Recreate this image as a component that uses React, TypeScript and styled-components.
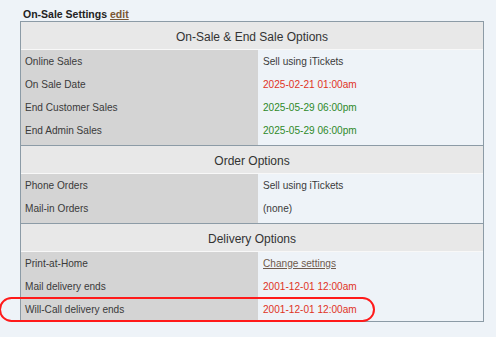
import React from 'react';
import styled, { createGlobalStyle } from 'styled-components';

const GlobalStyle = createGlobalStyle`
  html, body {
    margin: 0;
    padding: 0;
    background: #eef3f8;
    font-family: "Liberation Sans", Arial, sans-serif;
    color: #333;
  }
`;

const Page = styled.div`
  padding: 7px 0 0 20px;
  width: 464px;
`;

const Title = styled.div`
  font-size: 10.5px;
  font-weight: bold;
  line-height: 14px;
  padding-left: 3px;
  color: #222;

  a {
    color: #7a5634;
    text-decoration: underline;
    margin-left: 3px;
  }
`;

const Table = styled.div`
  border: 1px solid #8c9ba6;
`;

const Section = styled.div<{ $last?: boolean }>`
  border-bottom: ${p => (p.$last ? 'none' : '1px solid #8c9ba6')};
`;

const SectionHeader = styled.div`
  height: 27px;
  line-height: 30px;
  overflow: hidden;
  background: #e8e8e8;
  text-align: center;
  font-size: 12px;
  color: #333;
  border-bottom: 1px solid #f8f8f8;
`;

const Row = styled.div<{ $pad?: boolean }>`
  position: relative;
  display: grid;
  grid-template-columns: 237px 1fr;
  font-size: 10.1px;

  & > div {
    line-height: 23px;
    padding-bottom: ${p => (p.$pad ? '3px' : '0')};
  }
`;

const Label = styled.div`
  background: #d4d4d4;
  padding-left: 4px;
  color: #3a3a3a;
`;

const Value = styled.div<{ $tone?: 'red' | 'green' }>`
  padding-left: 5px;
  color: ${p => (p.$tone === 'red' ? '#e0331f' : p.$tone === 'green' ? '#2f8a2a' : '#3a3a3a')};
`;

const Link = styled.span`
  color: #6e5a4c;
  text-decoration: underline;
`;

const Highlight = styled.div`
  position: absolute;
  left: -22px;
  top: -1px;
  width: 372px;
  height: 21px;
  border: 2px solid #ff1a1a;
  border-radius: 13px;
  pointer-events: none;
`;

type Item = { label: string; value: React.ReactNode; tone?: 'red' | 'green'; mark?: boolean };

const sections: { title: string; items: Item[] }[] = [
  {
    title: 'On-Sale & End Sale Options',
    items: [
      { label: 'Online Sales', value: 'Sell using iTickets' },
      { label: 'On Sale Date', value: '2025-02-21 01:00am', tone: 'red' },
      { label: 'End Customer Sales', value: '2025-05-29 06:00pm', tone: 'green' },
      { label: 'End Admin Sales', value: '2025-05-29 06:00pm', tone: 'green' },
    ],
  },
  {
    title: 'Order Options',
    items: [
      { label: 'Phone Orders', value: 'Sell using iTickets' },
      { label: 'Mail-in Orders', value: '(none)' },
    ],
  },
  {
    title: 'Delivery Options',
    items: [
      { label: 'Print-at-Home', value: <Link>Change settings</Link> },
      { label: 'Mail delivery ends', value: '2001-12-01 12:00am', tone: 'red' },
      { label: 'Will-Call delivery ends', value: '2001-12-01 12:00am', tone: 'red', mark: true },
    ],
  },
];

export default function App() {
  return (
    <>
      <GlobalStyle />
      <Page>
        <Title>
          On-Sale Settings<a href="#">edit</a>
        </Title>
        <Table>
          {sections.map((s, si) => {
            const last = si === sections.length - 1;
            return (
              <Section key={s.title} $last={last}>
                <SectionHeader>{s.title}</SectionHeader>
                {s.items.map((it, i) => (
                  <Row key={it.label} $pad={!last && i === s.items.length - 1}>
                    <Label>{it.label}</Label>
                    <Value $tone={it.tone}>{it.value}</Value>
                    {it.mark && <Highlight />}
                  </Row>
                ))}
              </Section>
            );
          })}
        </Table>
      </Page>
    </>
  );
}
